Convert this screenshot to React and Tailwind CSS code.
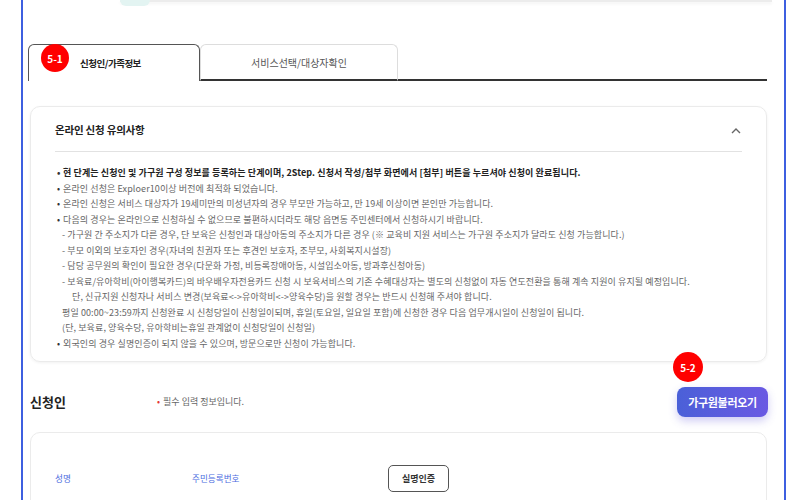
import React from "react";

const notices = [
  { text: "현 단계는 신청인 및 가구원 구성 정보를 등록하는 단계이며, 2Step. 신청서 작성/첨부 화면에서 [첨부] 버튼을 누르셔야 신청이 완료됩니다.", bullet: true, bold: true },
  { text: "온라인 선청은 Exploer10이상 버전에 최적화 되었습니다.", bullet: true },
  { text: "온라인 신청은 서비스 대상자가 19세미만의 미성년자의 경우 부모만 가능하고, 만 19세 이상이면 본인만 가능합니다.", bullet: true },
  { text: "다음의 경우는 온라인으로 신청하실 수 없으므로 불편하시더라도 해당 읍면동 주민센터에서 신청하시기 바랍니다.", bullet: true },
  { text: "- 가구원 간 주소지가 다른 경우, 단 보육은 신청인과 대상아동의 주소지가 다른 경우 (※ 교육비 지원 서비스는 가구원 주소지가 달라도 신청 가능합니다.)" },
  { text: "- 부모 이외의 보호자인 경우(자녀의 친권자 또는 후견인 보호자, 조부모, 사회복지시설장)" },
  { text: "- 담당 공무원의 확인이 필요한 경우(다문화 가정, 비등록장애아동, 시설입소아동, 방과후신청아동)" },
  { text: "- 보육료/유아학비(아이행복카드)의 바우배우자전용카드 신청 시 보육서비스의 기존 수혜대상자는 별도의 신청없이 자동 연도전환을 통해 계속 지원이 유지될 예정입니다." },
  { text: "단, 신규지원 신청자나 서비스 변경(보육료<->유아학비<->양육수당)을 원할 경우는 반드시 신청해 주셔야 합니다.", indent: true },
  { text: "평일 00:00~23:59까지 신청완료 시 신청당일이 신청일이되며, 휴일(토요일, 일요일 포함)에 신청한 경우 다음 업무개시일이 신청일이 됩니다." },
  { text: "(단, 보육료, 양육수당, 유아학비는휴일 관계없이 신청당일이 신청일)" },
  { text: "외국인의 경우 실명인증이 되지 않을 수 있으며, 방문으로만 신청이 가능합니다.", bullet: true },
];

const Badge = ({ label, className }) => (
  <div
    className={
      "absolute rounded-full bg-[#ff0000] text-white font-bold flex items-center justify-center " +
      className
    }
  >
    {label}
  </div>
);

export default function App() {
  return (
    <div
      className="w-[800px] h-[500px] bg-white overflow-hidden"
      style={{ fontFamily: '"Noto Sans CJK KR", "Noto Sans", sans-serif' }}
    >
      <div className="ml-[21px] w-[765px] h-full border-x-2 border-[#3d5fe0] px-[7px]">
        {/* bottom of previous card */}
        <div className="relative ml-[90px] w-[652px] h-[2px] bg-[#ececec] shadow-[0_2px_3px_rgba(0,0,0,0.06)]">
          <div className="absolute left-0 top-0 w-[30px] h-[6px] rounded-b-full bg-[#e3f4f2]" />
        </div>

        {/* tabs */}
        <div className="flex mt-[42px] ml-[-2px] w-[739px] h-[37px]">
          <div className="relative w-[172px] h-full border border-b-0 border-[#555] rounded-t-[6px] bg-white flex items-center pl-[51px]">
            <Badge label="5-1" className="left-[12px] top-[-1px] w-[28px] h-[28px] text-[10px]" />
            <span className="text-[9.5px] font-bold text-[#222] tracking-[-0.5px]">신청인/가족정보</span>
          </div>
          <div className="w-[198px] h-full border border-[#ddd] border-b-2 border-b-[#333] rounded-t-[6px] flex items-center justify-center">
            <span className="text-[10px] text-[#555]">서비스선택/대상자확인</span>
          </div>
          <div className="flex-1 border-b-2 border-[#333]" />
        </div>

        {/* notice card */}
        <div className="mt-[25px] w-[737px] h-[256px] rounded-[10px] border border-[#ebebeb] shadow-[0_1px_3px_rgba(0,0,0,0.06)] px-[24px]">
          <div className="h-[45px] border-b border-[#e2e2e2] flex items-center justify-between pt-[2px]">
            <span className="text-[10.5px] font-bold text-[#222] tracking-[-0.2px]">온라인 신청 유의사항</span>
            <svg width="10" height="7" viewBox="0 0 10 7" className="mr-[1px]">
              <polyline points="1,6 5,2 9,6" fill="none" stroke="#666" strokeWidth="1.4" />
            </svg>
          </div>
          <div className="mt-[13px]">
            {notices.map((n, i) => (
              <div
                key={i}
                className={
                  "h-[15.5px] leading-[15.5px] whitespace-nowrap text-[9px] " +
                  (n.bold ? "font-bold text-[#222] tracking-[0.1px] " : "text-[#666] tracking-[0.1px] ") +
                  (n.bullet ? "pl-[2px]" : n.indent ? "pl-[17px]" : "pl-[7px]")
                }
              >
                {n.bullet && <span className="inline-block w-[6px] text-[#333]">•</span>}
                {n.text}
              </div>
            ))}
          </div>
        </div>

        {/* applicant header */}
        <div className="relative mt-[25px] w-[738px] h-[30px] flex items-center">
          <span className="w-[127px] text-[13px] font-bold text-[#222]">신청인</span>
          <span className="text-[9px] text-[#666]">
            <span className="text-[#e53935] mr-[3px]">•</span>필수 입력 정보입니다.
          </span>
          <Badge label="5-2" className="left-[643px] top-[-35px] w-[30px] h-[30px] text-[10px]" />
          <div className="ml-auto h-[30px] w-[91px] rounded-[8px] bg-gradient-to-r from-[#4a60d8] to-[#6a59e3] shadow-[0_4px_8px_rgba(100,90,220,0.3)] flex items-center justify-center">
            <span className="text-[11px] font-bold text-white tracking-[-0.3px]">가구원불러오기</span>
          </div>
        </div>

        {/* applicant card */}
        <div className="mt-[15px] w-[737px] h-[120px] rounded-[10px] border border-[#ebebeb] px-[24px] pt-[32px]">
          <div className="flex items-center h-[27px]">
            <span className="w-[137px] text-[8.6px] text-[#4a6be0]">성명</span>
            <span className="w-[196px] text-[8.6px] text-[#4a6be0]">주민등록번호</span>
            <div className="w-[61px] h-[27px] rounded-[5px] border-[1.5px] border-[#555] flex items-center justify-center">
              <span className="text-[9px] font-bold text-[#333]">실명인증</span>
            </div>
          </div>
        </div>
      </div>
    </div>
  );
}
